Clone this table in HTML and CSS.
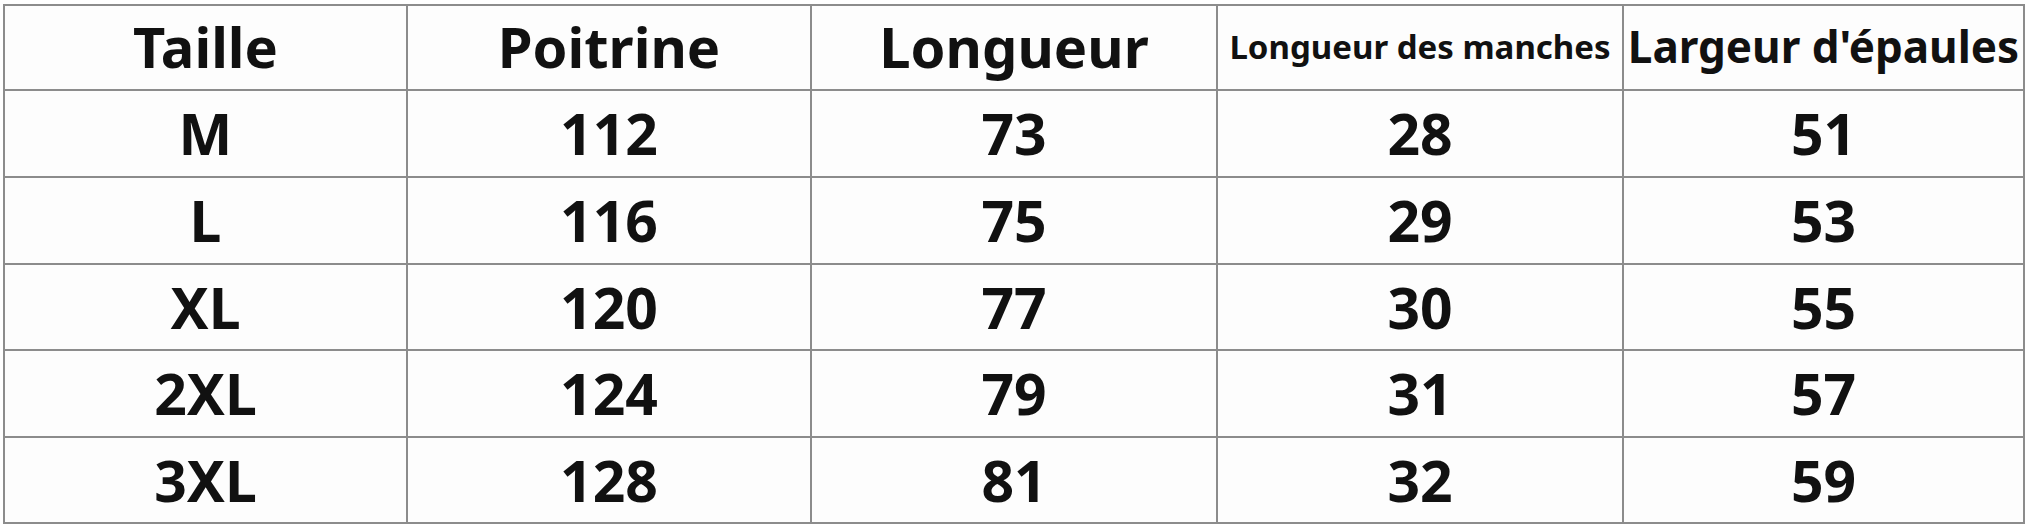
FILE: index.html
```html
<!DOCTYPE html>
<html lang="fr">
<head>
<meta charset="utf-8">
<title>Guide des tailles</title>
<link rel="stylesheet" href="styles.css">
</head>
<body>
<div class="page">
  <div class="table">
    <div class="cell head">Taille</div>
    <div class="cell head">Poitrine</div>
    <div class="cell head">Longueur</div>
    <div class="cell head small">Longueur des manches</div>
    <div class="cell head medium">Largeur d'épaules</div>

    <div class="cell">M</div><div class="cell">112</div><div class="cell">73</div><div class="cell">28</div><div class="cell">51</div>
    <div class="cell">L</div><div class="cell">116</div><div class="cell">75</div><div class="cell">29</div><div class="cell">53</div>
    <div class="cell">XL</div><div class="cell">120</div><div class="cell">77</div><div class="cell">30</div><div class="cell">55</div>
    <div class="cell">2XL</div><div class="cell">124</div><div class="cell">79</div><div class="cell">31</div><div class="cell">57</div>
    <div class="cell">3XL</div><div class="cell">128</div><div class="cell">81</div><div class="cell">32</div><div class="cell">59</div>
  </div>
</div>
</body>
</html>
```

FILE: styles.css
```css
html, body {
  margin: 0;
  padding: 0;
  background: #ffffff;
}

.page {
  padding: 4px 0 0 3px;
  width: 2028px;
  height: 528px;
  box-sizing: border-box;
}

.table {
  display: grid;
  grid-template-columns: 401px 402px 404px 404px 399px;
  grid-template-rows: 83px 85px 85px 84px 85px 84px;
  gap: 2px;
  padding: 2px;
  width: 2022px;
  box-sizing: border-box;
  background: #8c8c8c;
}

.cell {
  background: #fdfdfd;
  display: flex;
  align-items: center;
  justify-content: center;
  font-family: "Noto Sans", "Open Sans", sans-serif;
  font-weight: 700;
  font-size: 57px;
  color: #111111;
  white-space: nowrap;
  line-height: 1;
}

.head {
  font-size: 56px;
  padding-bottom: 3px;
}

.head.small {
  font-size: 33px;
}

.head.medium {
  font-size: 44px;
}
```
